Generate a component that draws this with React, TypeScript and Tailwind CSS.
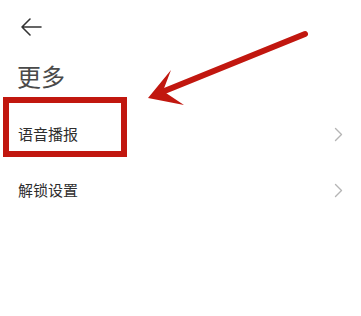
const items = ['语音播报', '解锁设置']

export default function App() {
    return (
        <div className="relative w-[361px] h-[316px] bg-white overflow-hidden font-['Noto_Sans_CJK_SC','Noto_Sans',sans-serif]">
            <div className="pl-[19px] pt-[17px] h-[20px] box-content">
                <svg width="24" height="20" viewBox="0 0 24 20" fill="none" stroke="#333" strokeWidth="1.6" strokeLinecap="round" strokeLinejoin="round">
                    <path d="M3 10h19M11 2L3 10l8 8" />
                </svg>
            </div>
            <h1 className="mt-[24px] pl-[17px] text-[24px] leading-[30px] text-[#4a4a4a] font-normal">更多</h1>
            <div className="mt-[15px]">
                {items.map((label) => (
                    <div key={label} className="h-[56px] flex items-center justify-between pl-[18px] pr-[18px]">
                        <span className="text-[15px] text-[#2e2e2e]">{label}</span>
                        <svg width="9" height="15" viewBox="0 0 9 15" fill="none" stroke="#b5b5b5" strokeWidth="1.4" strokeLinecap="round" strokeLinejoin="round">
                            <path d="M1.5 1.5l6 6-6 6" />
                        </svg>
                    </div>
                ))}
            </div>

            {/* annotation overlay */}
            <div className="absolute left-[3px] top-[97px] w-[124px] h-[60px] border-[6px] border-[#c1170f]" />
            <svg className="absolute left-0 top-0" width="361" height="316" viewBox="0 0 361 316">
                <line x1="305" y1="34" x2="162" y2="92" stroke="#c1170f" strokeWidth="6" strokeLinecap="round" />
                <path d="M148 98 L171 70 L163 91 L184 105 Z" fill="#c1170f" />
            </svg>
        </div>
    )
}
